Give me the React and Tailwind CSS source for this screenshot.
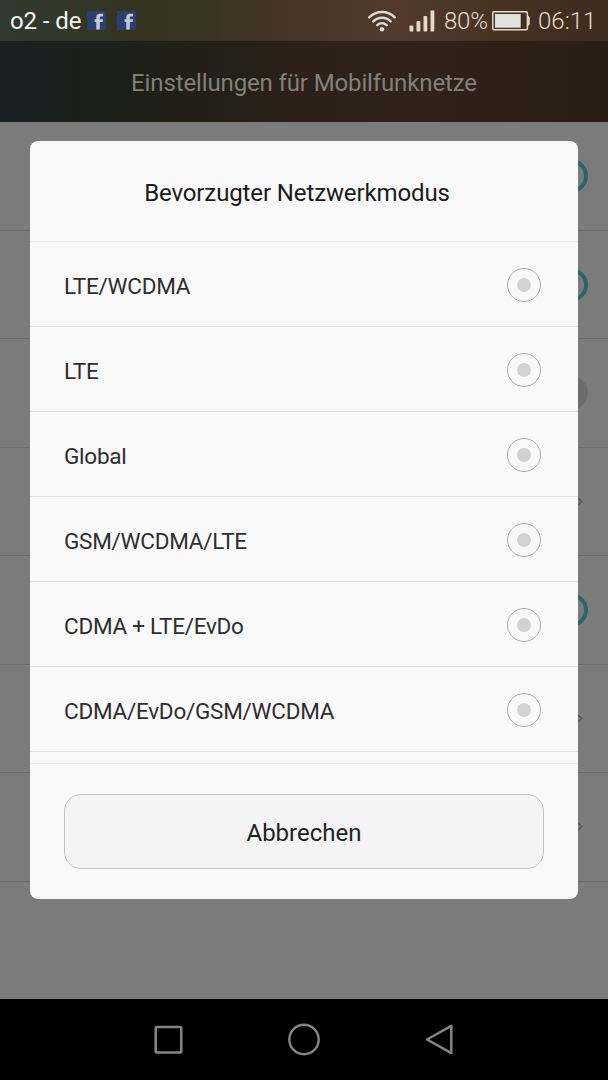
import React, { useState } from 'react';

const networkModes = [
  'LTE/WCDMA',
  'LTE',
  'Global',
  'GSM/WCDMA/LTE',
  'CDMA + LTE/EvDo',
  'CDMA/EvDo/GSM/WCDMA',
];

// Settings rows behind the dialog, only their right edge is visible
const settingsRows = [
  { type: 'on', height: 'h-[109px]' },
  { type: 'on', height: 'h-[108px]' },
  { type: 'off', height: 'h-[109px]' },
  { type: 'link', height: 'h-[108px]' },
  { type: 'on', height: 'h-[109px]' },
  { type: 'link', height: 'h-[108px]' },
  { type: 'link', height: 'h-[109px]' },
];

const FacebookIcon = () => (
  <svg className="w-[19px] h-[19px]" viewBox="0 0 19 19">
    <rect width="19" height="19" rx="1" fill="#2c3f70" />
    <path d="M9.3 18.5V11H7.6V8.2h1.7V6.3c0-2.3 1.2-3.5 3.4-3.5h3.4v2.8h-2.1c-.9 0-1.2.4-1.2 1.2v1.4h3.3L15.6 11h-2.8v7.5z" fill="#c3cad3" />
  </svg>
);

const WifiIcon = () => (
  <svg className="w-[30px] h-[22px]" viewBox="0 0 30 22" fill="none" stroke="#e3d9d0" strokeWidth="2.5" strokeLinecap="round">
    <path d="M2.2 7.3C9.4.2 20.6.2 27.8 7.3" />
    <path d="M6.3 11.4c5-4.9 12.4-4.9 17.4 0" />
    <path d="M10.3 15.2c2.8-2.7 6.6-2.7 9.4 0" />
    <circle cx="15" cy="19.3" r="2.3" fill="#e3d9d0" stroke="none" />
  </svg>
);

const SignalIcon = () => (
  <svg className="w-[26px] h-[22px]" viewBox="0 0 26 22" fill="#e3d9d0">
    <rect x="0.5" y="15.5" width="3.8" height="6" rx="0.8" />
    <rect x="7.5" y="11" width="3.8" height="10.5" rx="0.8" />
    <rect x="14.5" y="6" width="3.8" height="15.5" rx="0.8" />
    <rect x="21.5" y="0.5" width="3.8" height="21" rx="0.8" />
  </svg>
);

const BatteryIcon = () => (
  <svg className="w-[38px] h-[20px]" viewBox="0 0 38 20">
    <rect x="0.8" y="0.8" width="34.6" height="18" rx="1.2" fill="none" stroke="#e3d9d0" strokeWidth="1.5" />
    <rect x="3" y="3" width="25.7" height="13.7" fill="#e2e2dc" />
    <path d="M36 5.2l1.4 1v7.4l-1.4 1z" fill="#e3d9d0" stroke="#e3d9d0" strokeWidth="0.6" />
  </svg>
);

const StatusBar = () => (
  <div className="h-[41px] flex items-center shrink-0 pt-[2px] pl-[10px] pr-[12px] bg-[linear-gradient(90deg,#303a30_0%,#34341f_24%,#463528_48%,#523b2d_65%,#44301f_88%,#3d2b20_100%)]">
    <span className="text-[24px] leading-[28px] tracking-[-0.1px] text-[#f4f4ef] w-[77px] pb-[1px]">o2 - de</span>
    <div className="flex gap-[11px] pb-[3px]">
      <FacebookIcon />
      <FacebookIcon />
    </div>
    <div className="ml-auto flex items-center text-[#e3d9d0] text-[24px] leading-[28px]">
      <div className="pb-[2px] mr-[12px]"><WifiIcon /></div>
      <div className="pb-[2px] mr-[9px]"><SignalIcon /></div>
      <span className="w-[48px] font-light whitespace-nowrap tracking-[-0.2px] pb-[2px]">80%</span>
      <div className="pb-[2px] mr-[8px]"><BatteryIcon /></div>
      <span className="font-light w-[58px] whitespace-nowrap pb-[2px]">06:11</span>
    </div>
  </div>
);

const RowControl = ({ type }) => {
  if (type === 'on') {
    return <span className="w-[34px] h-[34px] rounded-full border-4 border-[#286763] mr-5" />;
  }
  if (type === 'off') {
    return <span className="w-[34px] h-[34px] rounded-full bg-[#6c6c6c] mr-5" />;
  }
  return (
    <svg className="w-[7px] h-[12px] mr-[25px]" viewBox="0 0 7 12" fill="none" stroke="#565656" strokeWidth="1.5">
      <path d="M0.8 1L5.8 5.5L0.8 10" />
    </svg>
  );
};

const RadioRow = ({ label, checked, onSelect }) => (
  <button
    type="button"
    role="radio"
    aria-checked={checked}
    onClick={onSelect}
    className="w-full h-[85px] flex items-center justify-between pl-[34px] pr-[37.5px] border-b border-[#e0e0e0] text-left"
  >
    <span className="text-[22.5px] leading-[28px] tracking-[-0.25px] text-[#2e2e2e] pt-[3px]">{label}</span>
    <span className="w-[34px] h-[34px] mt-[1px] rounded-full border border-[#acacac] flex items-center justify-center">
      <span className={`w-[14px] h-[14px] rounded-full ${checked ? 'bg-[#30a59d]' : 'bg-[#d2d2d2]'}`} />
    </span>
  </button>
);

const NetworkDialog = () => {
  const [mode, setMode] = useState(null);

  return (
    <div role="dialog" className="w-[548px] h-[758px] rounded-[8px] bg-[#f9f9f9] flex flex-col overflow-hidden">
      <div className="h-[101px] shrink-0 border-b border-[#e9e9e9] flex items-center justify-center pr-[14px] pt-[4px]">
        <h2 className="text-[24px] leading-[28px] tracking-[-0.12px] text-[#1b1b1b] whitespace-nowrap">Bevorzugter Netzwerkmodus</h2>
      </div>
      <div role="radiogroup" className="h-[522px] shrink-0 overflow-hidden border-b border-[#ebebeb]">
        {networkModes.map((label) => (
          <RadioRow key={label} label={label} checked={mode === label} onSelect={() => setMode(label)} />
        ))}
      </div>
      <div className="flex-1 px-[34px] pt-[30px] pb-[30px]">
        <button type="button" className="w-full h-[75px] rounded-[17px] border border-[#c4c4c4] bg-[#f4f4f4] text-[24px] text-[#222222] pt-[3px]">
          Abbrechen
        </button>
      </div>
    </div>
  );
};

const NavBar = () => (
  <div className="h-[81px] shrink-0 bg-black flex items-center justify-center gap-[103px]">
    <svg className="w-[32px] h-[32px]" viewBox="0 0 32 32" fill="none" stroke="#858585" strokeWidth="2.5" strokeLinejoin="round">
      <rect x="3.7" y="2.9" width="25.6" height="25.6" rx="0.8" />
    </svg>
    <svg className="w-[34px] h-[34px]" viewBox="0 0 34 34" fill="none" stroke="#858585" strokeWidth="2.4">
      <circle cx="17" cy="16.5" r="14.7" />
    </svg>
    <svg className="w-[32px] h-[32px]" viewBox="0 0 32 32" fill="none" stroke="#858585" strokeWidth="2.5" strokeLinejoin="round">
      <path d="M3 15.5L27.3 1.9V29.1Z" />
    </svg>
  </div>
);

const App = () => {
  return (
    <div className="relative w-[608px] h-[1080px] flex flex-col overflow-hidden font-['Roboto',sans-serif] bg-[#7b7b7b]">
      <StatusBar />
      <header className="h-[81px] shrink-0 flex items-center justify-center pt-[3px] bg-[linear-gradient(90deg,#182021_0%,#1f1f16_27%,#2c2018_48%,#30221a_68%,#291c13_100%)]">
        <h1 className="text-[24px] leading-[28px] tracking-[-0.13px] text-[#82807b] whitespace-nowrap">Einstellungen für Mobilfunknetze</h1>
      </header>
      <main className="flex-1">
        {settingsRows.map((row, i) => (
          <div key={i} className={`${row.height} border-b border-[#6c6c6c] flex items-center justify-end`}>
            <RowControl type={row.type} />
          </div>
        ))}
      </main>
      <NavBar />
      <div className="absolute inset-x-0 top-[141px] flex justify-center">
        <NetworkDialog />
      </div>
    </div>
  );
};

export default App;
